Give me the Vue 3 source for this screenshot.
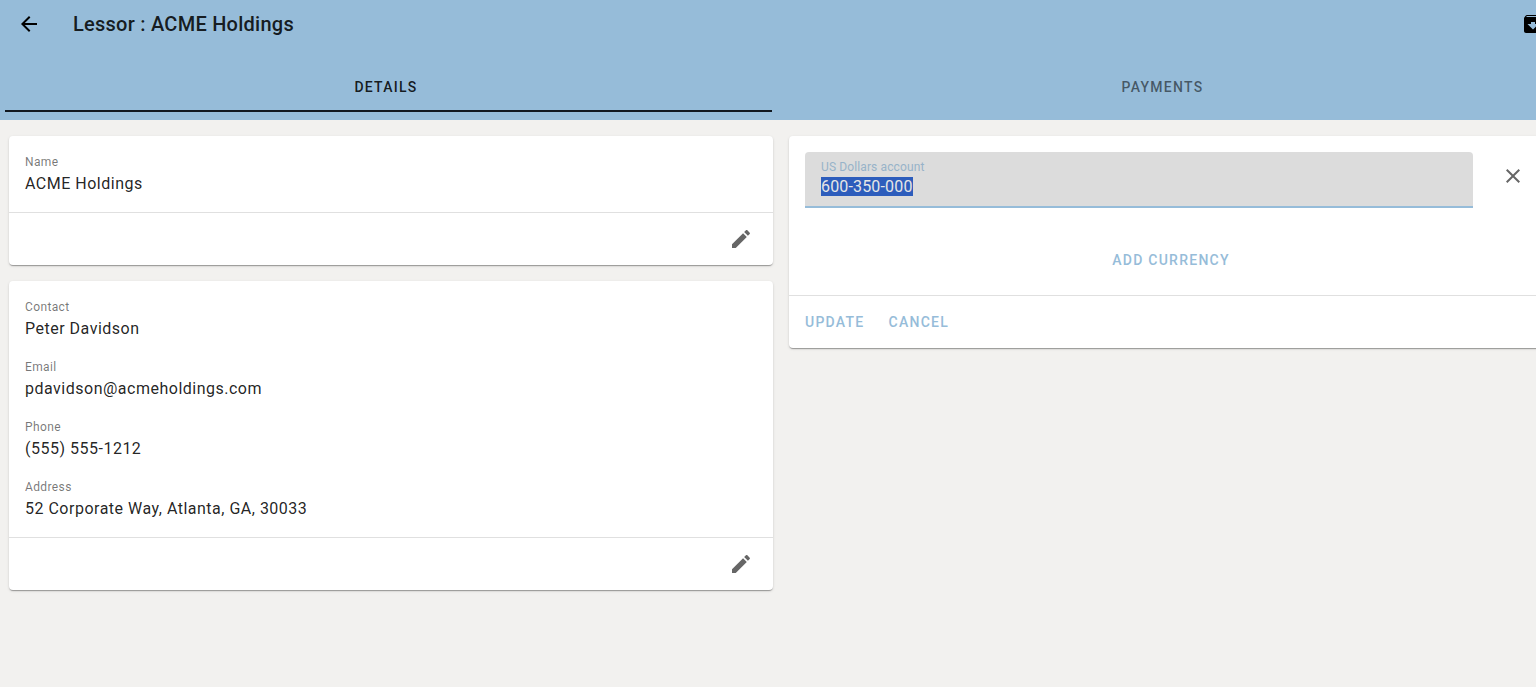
<script setup>
import { ref, onMounted } from 'vue'

const account = ref('600-350-000')
const accountInput = ref(null)

const cards = [
  { id: 'name', action: 'Edit name', fields: [{ label: 'Name', value: 'ACME Holdings' }] },
  {
    id: 'contact',
    action: 'Edit contact',
    fields: [
      { label: 'Contact', value: 'Peter Davidson' },
      { label: 'Email', value: 'pdavidson@acmeholdings.com' },
      { label: 'Phone', value: '(555) 555-1212' },
      { label: 'Address', value: '52 Corporate Way, Atlanta, GA, 30033' }
    ]
  }
]

onMounted(() => {
  accountInput.value.focus()
  accountInput.value.select()
})
</script>

<template>
  <div class="page">
    <header class="app-bar">
      <div class="toolbar">
        <button class="icon-button" type="button" aria-label="Back">
          <svg viewBox="0 0 24 24"><path d="M20 11H7.83l5.59-5.59L12 4l-8 8 8 8 1.41-1.41L7.83 13H20v-2z" /></svg>
        </button>
        <h1 class="title">Lessor : ACME Holdings</h1>
        <button class="icon-button archive" type="button" aria-label="Archive">
          <svg viewBox="0 0 24 24"><path d="M20.54 5.23l-1.39-1.68C18.88 3.21 18.47 3 18 3H6c-.47 0-.88.21-1.16.55L3.46 5.23C3.17 5.57 3 6.02 3 6.5V19c0 1.1.9 2 2 2h14c1.1 0 2-.9 2-2V6.5c0-.48-.17-.93-.46-1.27zM12 17.5L6.5 12H10v-2h4v2h3.5L12 17.5zM5.12 5l.81-1h12l.94 1H5.12z" /></svg>
        </button>
      </div>
      <nav class="tabs" role="tablist">
        <button class="tab active" type="button" role="tab" aria-selected="true">DETAILS</button>
        <button class="tab" type="button" role="tab" aria-selected="false">PAYMENTS</button>
      </nav>
    </header>

    <main class="content">
      <div class="column">
        <section v-for="card in cards" :key="card.id" class="card">
          <dl class="card-body">
            <div v-for="field in card.fields" :key="field.label">
              <dt>{{ field.label }}</dt>
              <dd>{{ field.value }}</dd>
            </div>
          </dl>
          <div class="card-actions end">
            <button class="icon-button muted" type="button" :aria-label="card.action">
              <svg viewBox="0 0 24 24"><path d="M3 17.25V21h3.75L17.81 9.94l-3.75-3.75L3 17.25zM20.71 7.04c.39-.39.39-1.02 0-1.41l-2.34-2.34c-.39-.39-1.02-.39-1.41 0l-1.83 1.83 3.75 3.75 1.83-1.83z" /></svg>
            </button>
          </div>
        </section>
      </div>

      <div class="column">
        <form class="card" @submit.prevent>
          <div class="account-row">
            <div class="text-field">
              <label for="usd-account">US Dollars account</label>
              <input id="usd-account" ref="accountInput" v-model="account" type="text" autocomplete="off" spellcheck="false" />
            </div>
            <button class="icon-button muted" type="button" aria-label="Remove account">
              <svg viewBox="0 0 24 24"><path d="M19 6.41L17.59 5 12 10.59 6.41 5 5 6.41 10.59 12 5 17.59 6.41 19 12 13.41 17.59 19 19 17.59 13.41 12z" /></svg>
            </button>
          </div>
          <div class="add-row">
            <button class="text-button" type="button">ADD CURRENCY</button>
          </div>
          <div class="card-actions">
            <button class="text-button" type="submit">UPDATE</button>
            <button class="text-button" type="button">CANCEL</button>
          </div>
        </form>
      </div>
    </main>
  </div>
</template>

<style>
body {
  margin: 0;
  background: #f2f1ef;
}
</style>

<style scoped>
.page {
  min-height: 100vh;
  overflow: hidden;
  background: #f2f1ef;
  color: rgba(0, 0, 0, 0.87);
  font-family: Roboto, "Liberation Sans", sans-serif;
}
* {
  box-sizing: border-box;
}
button {
  border: 0;
  padding: 0;
  background: transparent;
  font-family: inherit;
  cursor: pointer;
}
svg {
  display: block;
  width: 24px;
  height: 24px;
  fill: currentColor;
}
.app-bar {
  height: 120px;
  background: #96bcd9;
}
.toolbar {
  display: flex;
  align-items: center;
  width: calc(100% + 21px);
  height: 48px;
  padding-left: 5px;
}
.icon-button {
  display: flex;
  flex: none;
  align-items: center;
  justify-content: center;
  width: 48px;
  height: 48px;
  color: #000;
}
.icon-button.muted {
  color: rgba(0, 0, 0, 0.6);
}
.archive {
  margin-left: auto;
}
.title {
  margin: 0 0 0 20px;
  font-size: 20px;
  font-weight: 500;
  line-height: 32px;
  letter-spacing: 0.0125em;
}
.tabs {
  display: grid;
  grid-template-columns: 1fr 1fr;
  width: calc(100% + 14px);
  height: 64px;
}
.tab {
  height: 64px;
  padding-top: 14px;
  color: rgba(0, 0, 0, 0.54);
  font-size: 14px;
  font-weight: 500;
  line-height: 36px;
  letter-spacing: 0.09em;
}
.tab.active {
  margin: 0 3px 0 5px;
  padding: 16px 5px 0 0;
  border-bottom: 2px solid #111820;
  color: rgba(0, 0, 0, 0.87);
}
.content {
  display: grid;
  grid-template-columns: 1fr 1fr;
  gap: 16px;
  align-items: start;
  width: calc(100% + 17px);
  padding: 16px 0 16px 9px;
}
.column {
  display: grid;
  gap: 16px;
}
.card {
  border-radius: 4px;
  background: #fff;
  box-shadow: 0 2px 1px -1px rgba(0, 0, 0, 0.2), 0 1px 1px 0 rgba(0, 0, 0, 0.14), 0 1px 3px 0 rgba(0, 0, 0, 0.12);
}
.card-body {
  display: grid;
  gap: 16px;
  margin: 0;
  padding: 16px;
}
dt {
  color: rgba(0, 0, 0, 0.54);
  font-size: 12px;
  line-height: 20px;
  letter-spacing: 0.03125em;
}
dd {
  margin: 0;
  font-size: 16px;
  line-height: 24px;
  letter-spacing: 0.03125em;
}
.card-actions {
  display: flex;
  align-items: center;
  gap: 8px;
  height: 53px;
  padding: 0 8px;
  border-top: 1px solid #e0e0e0;
}
.card-actions.end {
  justify-content: flex-end;
}
.account-row {
  display: flex;
  gap: 16px;
  padding: 16px 16px 0;
}
.text-field {
  flex: 1;
  height: 56px;
  padding: 7px 16px 0;
  border-bottom: 2px solid #96bcd9;
  border-radius: 4px 4px 0 0;
  background: #dcdcdc;
}
.text-field label {
  display: block;
  color: #97b3c9;
  font-size: 12px;
  line-height: 16px;
  letter-spacing: 0.01em;
}
.text-field input {
  display: block;
  width: 100%;
  height: 22px;
  padding: 0;
  border: 0;
  outline: 0;
  background: transparent;
  color: rgba(0, 0, 0, 0.87);
  font-family: inherit;
  font-size: 16px;
  letter-spacing: 0.01em;
}
.text-field input::selection {
  background: rgba(43, 91, 187, 0.99);
  color: #e6e6e6;
}
.add-row {
  display: flex;
  justify-content: center;
  padding: 34px 16px 17px;
}
.text-button {
  height: 36px;
  padding: 0 8px;
  color: #96bcd9;
  font-size: 14px;
  font-weight: 500;
  line-height: 36px;
  letter-spacing: 0.09em;
}
</style>
